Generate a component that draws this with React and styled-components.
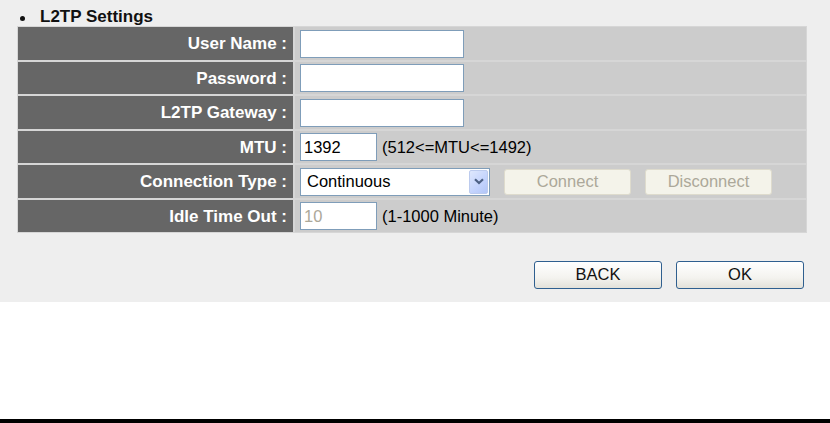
import React from "react";
import styled, { createGlobalStyle } from "styled-components";

const GlobalStyle = createGlobalStyle`
  html, body {
    margin: 0;
    padding: 0;
    background: #ffffff;
    font-family: "Liberation Sans", Arial, sans-serif;
  }
`;

const rows = [
  { label: "User Name :", kind: "text" },
  { label: "Password :", kind: "text" },
  { label: "L2TP Gateway :", kind: "text" },
  { label: "MTU :", kind: "mtu" },
  { label: "Connection Type :", kind: "conn" },
  { label: "Idle Time Out :", kind: "idle" },
];

const App = () => {
  const renderValue = (kind) => {
    if (kind === "mtu") {
      return (
        <>
          <TextInput short defaultValue="1392" />
          <Hint>(512&lt;=MTU&lt;=1492)</Hint>
        </>
      );
    }
    if (kind === "conn") {
      return (
        <>
          <SelectBox>
            <span>Continuous</span>
            <ArrowButton>
              <svg width="10" height="7" viewBox="0 0 10 7">
                <path
                  d="M1 1.2 L5 5 L9 1.2"
                  fill="none"
                  stroke="#4d6185"
                  strokeWidth="2.2"
                />
              </svg>
            </ArrowButton>
          </SelectBox>
          <DisabledButton disabled>Connect</DisabledButton>
          <DisabledButton disabled>Disconnect</DisabledButton>
        </>
      );
    }
    if (kind === "idle") {
      return (
        <>
          <TextInput short dim defaultValue="10" />
          <Hint>(1-1000 Minute)</Hint>
        </>
      );
    }
    return <TextInput />;
  };

  return (
    <Page>
      <GlobalStyle />
      <Panel>
        <Title>
          <Bullet />
          L2TP Settings
        </Title>
        <SettingsTable>
          {rows.map((row) => (
            <React.Fragment key={row.label}>
              <LabelCell>{row.label}</LabelCell>
              <ValueCell>{renderValue(row.kind)}</ValueCell>
            </React.Fragment>
          ))}
        </SettingsTable>
        <ButtonRow>
          <ActionButton>BACK</ActionButton>
          <ActionButton>OK</ActionButton>
        </ButtonRow>
      </Panel>
      <FooterBar />
    </Page>
  );
};

const Page = styled.div`
  height: 423px;
  display: flex;
  flex-direction: column;
  overflow: hidden;
`;

const Panel = styled.div`
  background: #eeeeee;
  height: 302px;
  box-sizing: border-box;
  padding: 8px 24px 0 18px;
`;

const Title = styled.div`
  display: flex;
  align-items: center;
  height: 17px;
  line-height: 17px;
  font-size: 17px;
  font-weight: bold;
  color: #111;
  margin-bottom: 2.3px;
`;

const Bullet = styled.span`
  width: 5px;
  height: 5px;
  border-radius: 50%;
  background: #111;
  margin: 3px 15px 0 2px;
`;

const SettingsTable = styled.div`
  display: grid;
  grid-template-columns: 275px 511px;
  grid-auto-rows: 32.5px;
  column-gap: 2px;
  row-gap: 2px;
`;

const LabelCell = styled.div`
  background: #666666;
  color: #ffffff;
  font-weight: bold;
  font-size: 17px;
  line-height: 17px;
  display: flex;
  align-items: center;
  justify-content: flex-end;
  padding-right: 6px;
  box-shadow: 0 0 0 1px #d6d6d6;
`;

const ValueCell = styled.div`
  background: #cccccc;
  display: flex;
  align-items: center;
  padding-left: 5px;
  font-size: 16.5px;
  box-shadow: 0 0 0 1px #d6d6d6;
`;

const TextInput = styled.input`
  box-sizing: border-box;
  width: ${(props) => (props.short ? "77px" : "164px")};
  height: 28px;
  border: 1px solid #7f9db9;
  background: #ffffff;
  padding: 0 3px;
  font-family: "Liberation Sans", Arial, sans-serif;
  font-size: 16.5px;
  color: ${(props) => (props.dim ? "#aca899" : "#000000")};
  outline: none;
`;

const Hint = styled.span`
  margin-left: 5px;
  color: #000;
`;

const SelectBox = styled.div`
  box-sizing: border-box;
  width: 190px;
  height: 28px;
  border: 1px solid #7f9db9;
  background: #ffffff;
  display: flex;
  align-items: center;
  justify-content: space-between;
  padding: 1px 1px 1px 6px;
  color: #000;
`;

const ArrowButton = styled.div`
  width: 19px;
  height: 24px;
  border-radius: 2px;
  background: linear-gradient(135deg, #dfe8fd 0%, #c3d3fd 60%, #b3c6f7 100%);
  border: 1px solid #bccbee;
  box-sizing: border-box;
  display: flex;
  align-items: center;
  justify-content: center;
`;

const DisabledButton = styled.button`
  box-sizing: border-box;
  width: 127px;
  height: 26px;
  margin-left: 14px;
  border: 1px solid #dedbcd;
  border-radius: 3px;
  background: #f4f3ea;
  color: #aca899;
  font-family: "Liberation Sans", Arial, sans-serif;
  font-size: 16.5px;
  padding: 0;
  &:first-of-type {
    margin-left: 14px;
  }
`;

const ButtonRow = styled.div`
  display: flex;
  justify-content: flex-end;
  gap: 14px;
  margin-top: 28.7px;
  padding-right: 2px;
`;

const ActionButton = styled.button`
  box-sizing: border-box;
  width: 128px;
  height: 28px;
  border: 1px solid #2f5f8f;
  border-radius: 3px;
  background: linear-gradient(#ffffff 0%, #f4f3ef 60%, #e3e1d9 100%);
  color: #111;
  font-family: "Liberation Sans", Arial, sans-serif;
  font-size: 16.5px;
  padding: 0;
`;

const FooterBar = styled.div`
  margin-top: auto;
  height: 4px;
  background: #000000;
`;

export default App;
